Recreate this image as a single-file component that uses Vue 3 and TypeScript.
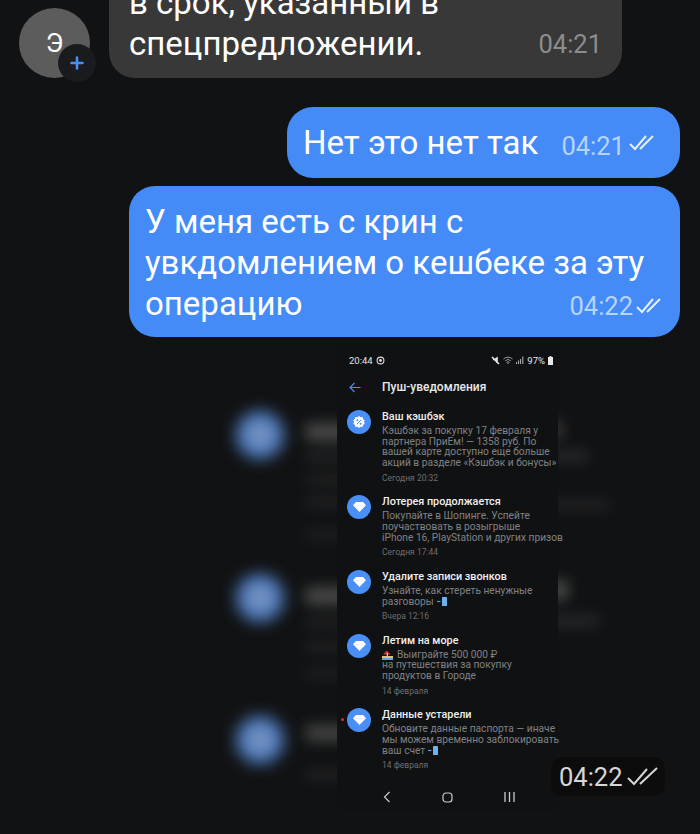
<script setup lang="ts">
interface Notice {
  title: string
  lines: string[]
  date: string
  icon: 'percent' | 'gem'
  emoji?: 'phone' | 'beach'
  unread?: boolean
}

const notices: Notice[] = [
  {
    title: 'Ваш кэшбэк',
    lines: ['Кэшбэк за покупку 17 февраля у', 'партнера ПриЕм! — 1358 руб. По', 'вашей карте доступно еще больше', 'акций в разделе «Кэшбэк и бонусы»'],
    date: 'Сегодня 20:32',
    icon: 'percent',
  },
  {
    title: 'Лотерея продолжается',
    lines: ['Покупайте в Шопинге. Успейте', 'поучаствовать в розыгрыше', 'iPhone 16, PlayStation и других призов'],
    date: 'Сегодня 17:44',
    icon: 'gem',
  },
  {
    title: 'Удалите записи звонков',
    lines: ['Узнайте, как стереть ненужные', 'разговоры'],
    date: 'Вчера 12:16',
    icon: 'gem',
    emoji: 'phone',
  },
  {
    title: 'Летим на море',
    lines: ['Выиграйте 500 000 ₽', 'на путешествия за покупку', 'продуктов в Городе'],
    date: '14 февраля',
    icon: 'gem',
    emoji: 'beach',
  },
  {
    title: 'Данные устарели',
    lines: ['Обновите данные паспорта — иначе', 'мы можем временно заблокировать', 'ваш счет'],
    date: '14 февраля',
    icon: 'gem',
    emoji: 'phone',
    unread: true,
  },
]

// smeared copies of the list, the picture's blurred backdrop
const blurCircles = [435, 598, 740]
const blurBars = [
  { x: 305, y: 423, w: 50, h: 18, o: 0.75 },
  { x: 305, y: 452, w: 120, h: 9, o: 0.3 },
  { x: 305, y: 475, w: 120, h: 9, o: 0.25 },
  { x: 305, y: 497, w: 120, h: 9, o: 0.25 },
  { x: 305, y: 530, w: 40, h: 8, o: 0.25 },
  { x: 305, y: 587, w: 50, h: 18, o: 0.75 },
  { x: 305, y: 618, w: 110, h: 9, o: 0.25 },
  { x: 305, y: 642, w: 90, h: 9, o: 0.25 },
  { x: 305, y: 670, w: 40, h: 8, o: 0.25 },
  { x: 305, y: 725, w: 50, h: 16, o: 0.7 },
  { x: 305, y: 770, w: 110, h: 9, o: 0.25 },
  { x: 550, y: 420, w: 12, h: 20, o: 0.6 },
  { x: 550, y: 450, w: 40, h: 12, o: 0.3 },
  { x: 550, y: 500, w: 60, h: 10, o: 0.25 },
  { x: 550, y: 580, w: 18, h: 20, o: 0.8 },
  { x: 550, y: 615, w: 50, h: 12, o: 0.3 },
]
</script>

<template>
  <div class="screen">
    <div class="incoming">
      <div class="avatar">
        Э
        <span class="avatar-add">
          <svg width="14" height="14" viewBox="0 0 14 14">
            <path d="M7 1.5v11M1.5 7h11" stroke="#4a8ff5" stroke-width="2.6" stroke-linecap="round" />
          </svg>
        </span>
      </div>
      <div class="bubble bubble-in">
        <p class="msg">в срок, указанный в<br />спецпредложении.</p>
        <span class="time time-in">04:21</span>
      </div>
    </div>

    <div class="bubble bubble-out first">
      <p class="msg">Нет это нет так</p>
      <span class="time">04:21</span>
      <svg class="checks" width="28" height="18" viewBox="0 0 28 18">
        <path d="M1 10l5 5L17 2M11 15L24 2" fill="none" stroke="currentColor" stroke-width="2" />
      </svg>
    </div>

    <div class="bubble bubble-out second">
      <p class="msg">У меня есть с крин с<br />увкдомлением о кешбеке за эту<br />операцию</p>
      <div class="meta">
        <span class="time">04:22</span>
        <svg class="checks" width="28" height="18" viewBox="0 0 28 18">
          <path d="M1 10l5 5L17 2M11 15L24 2" fill="none" stroke="currentColor" stroke-width="2" />
        </svg>
      </div>
    </div>

    <div class="shot">
      <div class="shot-blur">
        <i v-for="y in blurCircles" :key="y" class="blur-circle" :style="{ top: y - 345 - 24 + 'px' }"></i>
        <i
          v-for="b in blurBars"
          :key="b.x + '-' + b.y"
          class="blur-bar"
          :style="{ left: b.x + 'px', top: b.y - 345 + 'px', width: b.w + 'px', height: b.h + 'px', opacity: b.o }"
        ></i>
      </div>

      <div class="phone">
        <div class="status">
          <span class="status-left">
            20:44
            <svg width="9" height="9" viewBox="0 0 9 9">
              <circle cx="4.5" cy="4.5" r="3.4" fill="none" stroke="#ddd" stroke-width="1.1" />
              <circle cx="4.5" cy="4.5" r="1.4" fill="#ddd" />
            </svg>
          </span>
          <span class="status-right">
            <svg width="9" height="9" viewBox="0 0 9 9">
              <path d="M1 1l7 7M2 3.5h2L6 2v5" fill="none" stroke="#e8e8e8" stroke-width="1.6" />
            </svg>
            <svg width="10" height="8" viewBox="0 0 10 8">
              <path d="M0.5 3a6.5 6.5 0 0 1 9 0M2.2 4.8a4 4 0 0 1 5.6 0M5 7.6l1.2-1.2a1.7 1.7 0 0 0-2.4 0z" fill="none" stroke="#9a9a9a" stroke-width="1" />
            </svg>
            <svg width="8" height="8" viewBox="0 0 8 8">
              <path d="M0.5 8V6M2.5 8V4.5M4.5 8V3M6.8 8V0.5" stroke="#aaa" stroke-width="1.1" />
            </svg>
            <span>97%</span>
            <svg width="5" height="9" viewBox="0 0 5 9">
              <path d="M1.6 0h1.8v1H5v8H0V1h1.6z" fill="#e8e8e8" />
            </svg>
          </span>
        </div>

        <div class="toolbar">
          <svg width="12" height="11" viewBox="0 0 12 11">
            <path d="M11.5 5.5H1M5.5 1L1 5.5 5.500 10" fill="none" stroke="#4a8ff5" stroke-width="1.1" />
          </svg>
          <span>Пуш-уведомления</span>
        </div>

        <div class="notices">
          <div v-for="n in notices" :key="n.title" class="notice">
            <div class="notice-icon">
              <i v-if="n.unread" class="unread"></i>
              <svg v-if="n.icon === 'percent'" width="12" height="12" viewBox="0 0 12 12">
                <path d="M6 0l1.600 1.200 2-.1.500 1.900 1.600 1.200L11 6l.7 1.800-1.600 1.200-.5 1.900-2-.1L6 12l-1.600-1.200-2 .1-.5-1.900L.3 7.800 1 6 .3 4.200 1.900 3l.5-1.900 2 .1z" fill="#fff" />
                <path d="M8 4L4 8" stroke="#4a8ff5" stroke-width="1" />
                <circle cx="4.300" cy="4.300" r="1" fill="#4a8ff5" />
                <circle cx="7.700" cy="7.700" r="1" fill="#4a8ff5" />
              </svg>
              <svg v-else width="13" height="10" viewBox="0 0 13 10">
                <path d="M3 0h7l3 3.200L6.500 10 0 3.200z" fill="#fff" />
                <path d="M0 3.400h13" stroke="#cfe0fb" stroke-width=".6" />
              </svg>
            </div>
            <div class="notice-text">
              <div class="notice-title">{{ n.title }}</div>
              <div class="notice-body">
                <div v-for="(line, i) in n.lines" :key="i" class="notice-line">
                  <svg v-if="n.emoji === 'beach' && i === 0" class="emoji-beach" width="11" height="10" viewBox="0 0 11 10">
                    <path d="M1 4.500L4.500.5 9 4.500z" fill="#c8362e" />
                    <rect x="4.800" y="3" width="1" height="4" fill="#eee" />
                    <rect x="0" y="6" width="11" height="2" fill="#e3c06b" />
                    <rect x="0" y="8" width="11" height="2" fill="#58a9d8" />
                  </svg>
                  {{ line }}
                  <svg v-if="n.emoji === 'phone' && i === n.lines.length - 1" class="emoji-phone" width="10" height="9" viewBox="0 0 10 9">
                    <path d="M0 4.500h3.500" stroke="#4a9de8" stroke-width="1.200" />
                    <rect x="5" y="0" width="5" height="9" rx=".6" fill="#6db4ee" />
                  </svg>
                </div>
              </div>
              <div class="notice-date">{{ n.date }}</div>
            </div>
          </div>
        </div>

        <div class="nav">
          <svg width="8" height="12" viewBox="0 0 8 12">
            <path d="M6.500 1L1.500 6l5 5" fill="none" stroke="#ccc" stroke-width="1.200" />
          </svg>
          <svg width="11" height="11" viewBox="0 0 11 11">
            <rect x="1" y="1" width="9" height="9" rx="3" fill="none" stroke="#ccc" stroke-width="1.200" />
          </svg>
          <svg width="11" height="10" viewBox="0 0 11 10">
            <path d="M1 0v10M5.500 0v10M10 0v10" stroke="#ccc" stroke-width="1.300" />
          </svg>
        </div>
      </div>

      <div class="shot-time">
        <span>04:22</span>
        <svg width="32" height="20" viewBox="0 0 32 20">
          <path d="M1 11l6 6L20 2M13 17L30 1" fill="none" stroke="currentColor" stroke-width="2" />
        </svg>
      </div>
    </div>
  </div>
</template>

<style>
html,
body {
  background: #111213;
}
</style>

<style scoped>
.screen {
  width: 700px;
  height: 834px;
  overflow: hidden;
  background: #111213;
  font-family: Roboto, "Liberation Sans", sans-serif;
  color: #fff;
}

.incoming {
  display: flex;
  align-items: flex-end;
  gap: 19px;
  height: 78px;
  padding-left: 19px;
}

.avatar {
  position: relative;
  flex: none;
  display: flex;
  align-items: center;
  justify-content: center;
  width: 71px;
  height: 70px;
  border-radius: 50%;
  background: #5c5c5c;
  font-size: 26px;
}

.avatar-add {
  position: absolute;
  right: -6px;
  bottom: -4px;
  display: flex;
  align-items: center;
  justify-content: center;
  width: 38px;
  height: 38px;
  border-radius: 50%;
  background: #1a1b1e;
}

.bubble {
  display: flex;
  font-size: 33px;
}

.msg {
  margin: 0;
  line-height: 41px;
  white-space: nowrap;
}

.time {
  font-size: 25.500px;
  color: #b7d4fb;
}

.checks {
  color: #e6f0ff;
}

.bubble-in {
  flex: none;
  justify-content: space-between;
  align-items: flex-end;
  width: 513px;
  padding: 0 20px 14px;
  box-sizing: border-box;
  border-radius: 0 0 26px 26px;
  background: #383838;
}

.time-in {
  color: #8b8d8f;
  margin-bottom: 5px;
}

.bubble-out {
  margin-left: auto;
  margin-right: 20px;
  border-radius: 26px;
  background: #448bf8;
  box-sizing: border-box;
}

.first {
  align-items: center;
  width: 393px;
  height: 71px;
  margin-top: 29px;
  padding: 0 16px;
}

.first .time {
  margin-left: 23px;
  margin-top: 6px;
}

.first .checks {
  margin-left: 4px;
}

.second {
  position: relative;
  width: 551px;
  height: 151px;
  margin-top: 8px;
  padding: 15px 16px;
}

.meta {
  position: absolute;
  right: 16px;
  bottom: 16px;
  display: flex;
  align-items: center;
  gap: 3px;
}

.shot {
  position: relative;
  height: 489px;
  margin-top: 8px;
}

.shot-blur {
  position: absolute;
  inset: 0;
}

.blur-circle {
  position: absolute;
  left: 236px;
  width: 48px;
  height: 48px;
  border-radius: 50%;
  background: radial-gradient(circle, #8d9cb4 0, #4d7ec8 55%, #3a6bb0 100%);
  filter: blur(8px);
}

.blur-bar {
  position: absolute;
  border-radius: 5px;
  background: #5a5a5a;
  filter: blur(7px);
}

.phone {
  position: absolute;
  left: 337px;
  top: 0;
  width: 221px;
  height: 467px;
  display: flex;
  flex-direction: column;
  background: #101112;
  font-size: 10.400px;
}

.status {
  display: flex;
  justify-content: space-between;
  align-items: center;
  height: 14px;
  margin-top: 8px;
  padding: 0 5px 0 12px;
  color: #e4e4e4;
  font-size: 9.500px;
}

.status-left,
.status-right {
  display: flex;
  align-items: center;
  gap: 3px;
}

.toolbar {
  display: flex;
  align-items: center;
  gap: 21px;
  height: 16px;
  margin-top: 12px;
  padding-left: 12px;
  font-size: 12px;
  font-weight: 500;
  color: #e8e8e8;
}

.notices {
  display: flex;
  flex-direction: column;
  gap: 11.500px;
  margin-top: 15px;
}

.notice {
  display: flex;
  gap: 11px;
  padding-left: 10px;
}

.notice-icon {
  position: relative;
  flex: none;
  display: flex;
  align-items: center;
  justify-content: center;
  width: 24px;
  height: 24px;
  border-radius: 50%;
  background: #4a8ff5;
}

.unread {
  position: absolute;
  left: -6px;
  top: 10px;
  width: 3px;
  height: 3px;
  border-radius: 50%;
  background: #e02a2a;
}

.notice-title {
  font-size: 10.800px;
  font-weight: 500;
  line-height: 14px;
  color: #f0f0f0;
}

.notice-body {
  margin-top: 2px;
  color: #808284;
}

.notice-line {
  display: flex;
  align-items: center;
  gap: 3px;
  height: 10.700px;
  line-height: 10.700px;
  font-size: 10.200px;
  white-space: nowrap;
}

.notice-date {
  margin-top: 4px;
  font-size: 8.500px;
  line-height: 11px;
  color: #6c6e70;
}

.emoji-beach {
  margin-right: 1px;
}

.nav {
  position: absolute;
  left: 46px;
  top: 446px;
  display: flex;
  justify-content: space-between;
  align-items: center;
  width: 132px;
}

.shot-time {
  position: absolute;
  left: 551px;
  top: 412px;
  display: flex;
  align-items: center;
  gap: 4px;
  width: 114px;
  height: 39px;
  box-sizing: border-box;
  padding-left: 8px;
  border-radius: 12px;
  background: #0c0c0d;
  color: #d6d6d6;
  font-size: 25.500px;
}
</style>
